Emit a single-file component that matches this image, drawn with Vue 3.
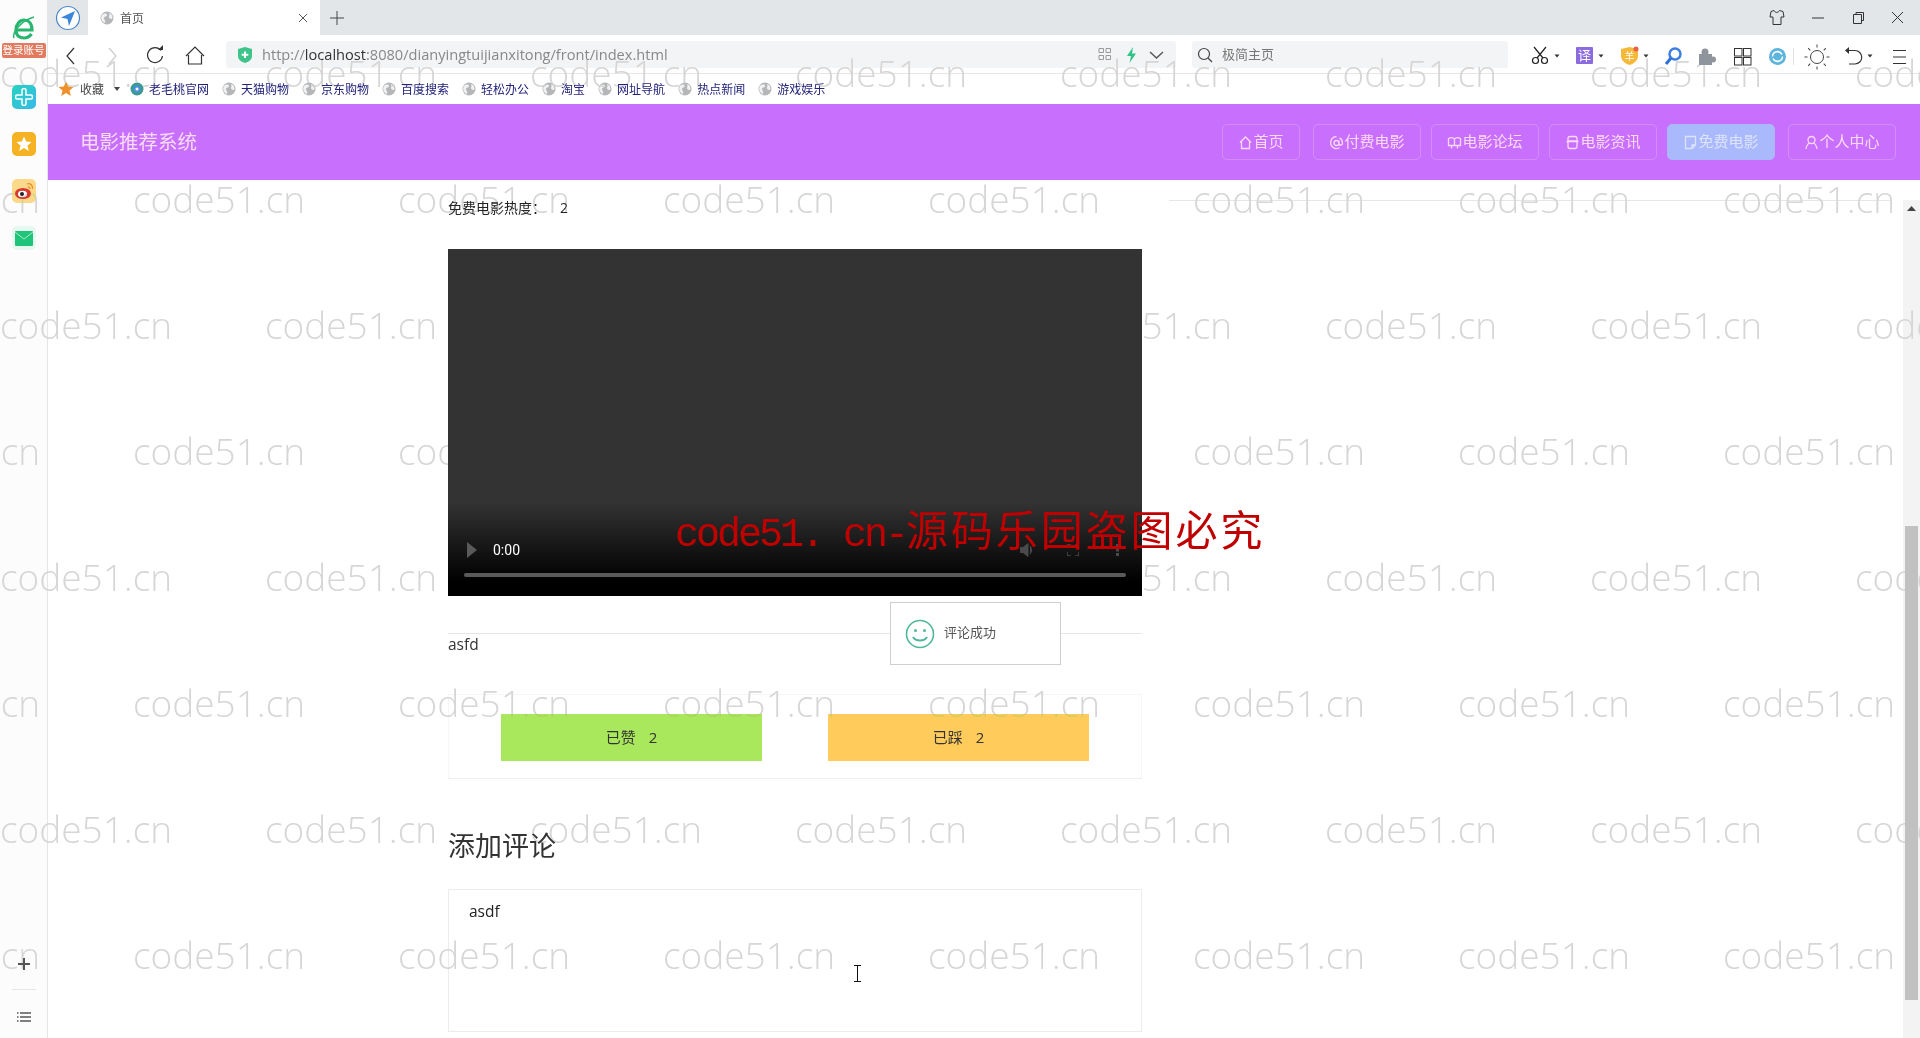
<script setup>
import { ref } from 'vue'

const comment = ref('asdf')

const bookmarks = ['天猫购物', '京东购物', '百度搜索', '轻松办公', '淘宝', '网址导航', '热点新闻', '游戏娱乐']

const navs = [
  { name: '首页', icon: 'M2 7.5 7.5 2 13 7.5M3.5 6.5V13.5H11.5V6.5', wide: true },
  { name: '付费电影', icon: 'M7.5 1.5a6 6 0 1 0 3 11.2M5 8a2.5 2.5 0 1 0 5 0a2.5 2.5 0 1 0-5 0M10 5.5V9.5a2 2 0 0 0 3.5-1.5a6 6 0 0 0-3-5.2' },
  { name: '电影论坛', icon: 'M1.5 3.5C3.5 2.5 6 2.5 7.5 4C9 2.5 11.500 2.5 13.500 3.500V10.500H1.500ZM7.500 4V10.500M4.500 10.500V13.500M10.500 10.500V13.500' },
  { name: '电影资讯', icon: 'M3 3a2 2 0 0 1 2-1.500H10a2 2 0 0 1 2 1.500V6H3ZM1.500 6.500H13.500M3 7V11.500A2 2 0 0 0 5 13.500H10A2 2 0 0 0 12 11.500V7' },
  { name: '免费电影', icon: 'M2.500 1.500H12.500V10L9 13.500H2.500ZM12.500 10H9V13.500', active: true },
  { name: '个人中心', icon: 'M7.500 1.500a3.500 3.500 0 1 0 0 7a3.500 3.500 0 1 0 0-7M2 14C2.500 10.500 4.500 8.500 5.500 8M13 14C12.500 10.500 10.500 8.500 9.500 8' }
]

// 水印的行，奇偶行错开半格
const marks = [0, 1, 2, 3, 4, 5, 6, 7]
const cols = [0, 1, 2, 3, 4, 5, 6, 7, 8]
const rays = [0, 45, 90, 135, 180, 225, 270, 315]
</script>

<template>
  <div class="screen">
    <svg width="0" height="0" class="defs">
      <symbol id="globe" viewBox="0 0 14 14">
        <circle cx="7" cy="7" r="6.500" fill="#b4b6b8" />
        <path d="M2 4c2-2 5-2 5 0s-3 1-3 3 2 2 1 5C2 11 0 7 2 4ZM9 2c3 1 4 4 3 6-2 0-3-1-3-2s1-2 0-4Z" fill="#f1f2f3" />
      </symbol>
    </svg>

    <aside class="sidebar">
      <svg class="logo" width="24" height="25" viewBox="0 0 24 25">
        <path d="M4 14H20C20 7 16 4 12 4S4 8 4 14S8 22 12 22C16 22 18 20 19.500 18" fill="none" stroke="#27b56f" stroke-width="3.200" />
        <path d="M2 22C0 17 8 5 22 1" fill="none" stroke="#27b56f" stroke-width="1.500" />
      </svg>
      <div class="badge">登录账号</div>
      <div class="side-icon teal">
        <svg width="18" height="18" viewBox="0 0 18 18"><path d="M7 2.500a2 2 0 0 1 4 0V7h4.500a2 2 0 0 1 0 4H11v4.500a2 2 0 0 1-4 0V11H2.500a2 2 0 0 1 0-4H7Z" fill="none" stroke="#fff" stroke-width="1.500" /></svg>
      </div>
      <div class="side-icon gold">
        <svg width="16" height="16" viewBox="0 0 16 16"><path d="M8 .5 10.200 5.500 15.600 6 11.500 9.600 12.800 15 8 12.100 3.200 15 4.500 9.600.4 6 5.800 5.500Z" fill="#fff" /></svg>
      </div>
      <div class="side-icon peach">
        <svg width="20" height="18" viewBox="0 0 20 18">
          <ellipse cx="9" cy="11.500" rx="8" ry="5.500" fill="#d9382e" />
          <ellipse cx="8.500" cy="12" rx="4.500" ry="3.300" fill="#fff" />
          <circle cx="8" cy="12" r="2" fill="#222" />
          <path d="M13 2C16 1 19 3 18.500 7M13.500 5C15 4.500 16 5.500 16 7" fill="none" stroke="#e8912c" stroke-width="1.300" />
        </svg>
      </div>
      <div class="side-icon mail">
        <svg width="18" height="15" viewBox="0 0 18 15">
          <rect width="18" height="15" rx="1" fill="#1fc47a" />
          <path d="M0 1 9 8 18 1" fill="none" stroke="#a9ecc9" stroke-width="1" />
        </svg>
      </div>
      <svg class="side-plus" width="14" height="14" viewBox="0 0 14 14"><path d="M7 1V13M1 7H13" stroke="#555" stroke-width="2" /></svg>
      <div class="side-sep"></div>
      <svg class="side-list" width="14" height="12" viewBox="0 0 14 12"><path d="M3 2H14M3 6H14M3 10H14" stroke="#555" stroke-width="1.500" /><path d="M0 2H1.500M0 6H1.500M0 10H1.500" stroke="#555" stroke-width="1.500" /></svg>
    </aside>

    <div class="window">
      <div class="tabbar">
        <div class="compass">
          <svg width="26" height="26" viewBox="0 0 26 26">
            <circle cx="13" cy="13" r="11.500" fill="#fff" stroke="#4a86c8" stroke-width="1.200" />
            <path d="M20 6 14 21 12.500 14 6 12.500Z" fill="#3a86dc" />
          </svg>
        </div>
        <div class="tab">
          <svg width="14" height="14"><use href="#globe" /></svg>
          <span class="tab-title">首页</span>
          <svg class="tab-close" width="10" height="10" viewBox="0 0 10 10"><path d="M1 1 9 9M9 1 1 9" stroke="#555" stroke-width="1" /></svg>
        </div>
        <svg class="tab-add" width="14" height="14" viewBox="0 0 14 14"><path d="M7 0V14M0 7H14" stroke="#444" stroke-width="1" /></svg>
        <svg class="winctl" width="160" height="35" viewBox="0 0 160 35" fill="none" stroke="#333">
          <path d="M11 11.500 14 10.500C15 13 18.500 13 19.500 10.500L23 11.500 24 17H21V24.500H13V17H10Z" />
          <path d="M52 18H64" />
          <path d="M93.500 14.500H101.500V23.500H93.500ZM96 14.500V12.500H103.500V20.500H101.500" />
          <path d="M132 12 143 23M143 12 132 23" />
        </svg>
      </div>

      <div class="toolbar">
        <svg class="tb-nav" width="168" height="38" viewBox="0 0 168 38" fill="none">
          <path d="M26 13 19 21 26 29" stroke="#333" stroke-width="1.200" />
          <path d="M61 13 68 21 61 29" stroke="#ccc" stroke-width="1.200" />
          <path d="M113 15.500A7.500 7.500 0 1 0 114.500 21" stroke="#333" stroke-width="1.200" />
          <path d="M110 15H115V10Z" fill="#333" />
          <path d="M138 21 147 12 156 21M140.500 20V29H153.500V20" stroke="#333" stroke-width="1.200" />
        </svg>
        <div class="urlbar">
          <svg width="14" height="16" viewBox="0 0 14 16">
            <path d="M7 0 14 2V9C14 13 10 15 7 16 4 15 0 13 0 9V2Z" fill="#3ec48a" />
            <path d="M7 4.500V11M3.700 7.700H10.300" stroke="#fff" stroke-width="2" />
          </svg>
          <span class="url"><span class="url-dim">http://</span>localhost<span class="url-dim">:8080/dianyingtuijianxitong/front/index.html</span></span>
          <svg class="url-tools" width="70" height="20" viewBox="0 0 70 20" fill="none">
            <path d="M3 3.500H7.500V7.500H3ZM10 3.500H14.500V7.500H10ZM3 10.500H7.500V14.500H3ZM10 10.500H14.500V14.500H10Z" stroke="#999" />
            <path d="M37 2 31 11H35L33.500 18 40 8.500H36Z" fill="#2ec486" />
            <path d="M54 7 60.500 13 67 7" stroke="#555" stroke-width="1.400" />
          </svg>
        </div>
        <div class="searchbar">
          <svg width="16" height="16" viewBox="0 0 16 16" fill="none" stroke="#444" stroke-width="1.200"><circle cx="7" cy="7" r="5.500" /><path d="M11 11 15 15" /></svg>
          <span class="search-text">极简主页</span>
        </div>
        <svg class="tb-tools" width="400" height="38" viewBox="0 0 400 38" fill="none">
          <g stroke="#222" stroke-width="1.200">
            <circle cx="15.500" cy="25.500" r="3" />
            <circle cx="24.500" cy="25.500" r="3" />
            <path d="M17 23 26 12M23 23 14 12" />
          </g>
          <path d="M34.500 19.500H39.500L37 22.500Z" fill="#333" />
          <rect x="56" y="12" width="17" height="17" rx="1" fill="#8c6be0" />
          <text x="64.500" y="25" class="tb-glyph">译</text>
          <path d="M78.500 19.500H83.500L81 22.500Z" fill="#333" />
          <path d="M109.500 12 118 14V21C118 26 113 29 109.500 30 106 29 101 26 101 21V14Z" fill="#f5b93a" />
          <text x="109.500" y="25" class="tb-glyph small">羊</text>
          <circle cx="116" cy="14" r="2.500" fill="#e8604c" />
          <path d="M123.500 19.500H128.500L126 22.500Z" fill="#333" />
          <circle cx="155" cy="19" r="5.500" stroke="#3d7fe0" stroke-width="2.500" />
          <path d="M151 23 146 29" stroke="#2f6fd8" stroke-width="3" />
          <g fill="#8f959c">
            <rect x="179" y="19" width="13" height="11" />
            <circle cx="185" cy="17" r="3.500" />
            <circle cx="193" cy="24.500" r="3" />
          </g>
          <g stroke="#333">
            <rect x="214.500" y="13.500" width="7.500" height="7.500" />
            <rect x="223.500" y="13.500" width="7.500" height="7.500" />
            <rect x="214.500" y="22.500" width="7.500" height="7.500" />
            <rect x="223.500" y="22.500" width="7.500" height="7.500" />
          </g>
          <circle cx="257.500" cy="21.500" r="8.500" fill="#5db4dc" />
          <path d="M252.500 21.500A5 5 0 0 1 262 19.500M262.500 21.500A5 5 0 0 1 253 23.500" stroke="#fff" stroke-width="1.500" />
          <path d="M273.500 13V30" stroke="#e2e2e2" />
          <circle cx="297" cy="22" r="6.500" stroke="#444" />
          <g stroke="#444">
            <path v-for="r in rays" :key="r" d="M297 12.500V9.500" :transform="`rotate(${r} 297 22)`" />
          </g>
          <path d="M328 15.500H335A6.500 6.500 0 0 1 335 29H329" stroke="#333" stroke-width="1.200" />
          <path d="M329 12V19L325 15.500Z" fill="#333" />
          <path d="M347.500 19.500H352.500L350 22.500Z" fill="#333" />
          <path d="M373 15.500H386M373 22H386M373 28.500H386" stroke="#333" />
        </svg>
      </div>

      <div class="bookmarks">
        <svg class="bm-star" width="16" height="16" viewBox="0 0 16 16"><path d="M8 .5 10.200 5.500 15.600 6 11.500 9.600 12.800 15 8 12.100 3.200 15 4.500 9.600.4 6 5.800 5.500Z" fill="#f0902a" /></svg>
        <span class="bm-fav">收藏</span>
        <svg class="bm-caret" width="6" height="4" viewBox="0 0 6 4"><path d="M0 0H6L3 4Z" fill="#444" /></svg>
        <div class="bm-item first">
          <svg width="14" height="14" viewBox="0 0 14 14">
            <circle cx="7" cy="7" r="6.500" fill="#3a9a90" />
            <circle cx="7" cy="7" r="3.500" fill="#4c8fe0" />
            <circle cx="7" cy="7" r="1.500" fill="#fff" />
          </svg>
          <span>老毛桃官网</span>
        </div>
        <div v-for="b in bookmarks" :key="b" class="bm-item">
          <svg width="14" height="14"><use href="#globe" /></svg>
          <span>{{ b }}</span>
        </div>
      </div>

      <header class="site-head">
        <div class="site-title">电影推荐系统</div>
        <nav class="site-nav">
          <a v-for="n in navs" :key="n.name" class="nav-btn" :class="{ active: n.active, wide: n.wide }">
            <svg width="15" height="15" viewBox="0 0 15 15" fill="none" stroke="currentColor" stroke-width="1.300"><path :d="n.icon" /></svg>
            {{ n.name }}
          </a>
        </nav>
      </header>

      <main class="page">
        <div class="detail">
          <div class="hot">免费电影热度：<span class="hot-num">2</span></div>
          <div class="video">
            <div class="controls">
              <div class="ctl-row">
                <svg width="10" height="16" viewBox="0 0 10 16"><path d="M0 0 10 8 0 16Z" fill="#5a5a5a" /></svg>
                <span class="time">0:00</span>
                <svg class="ctl-vol" width="14" height="14" viewBox="0 0 14 14"><path d="M0 4.500H3L8 .5V13.500L3 9.500H0ZM10 3C12 5 12 9 10 11" fill="#4a4a4a" stroke="#4a4a4a" /></svg>
                <svg class="ctl-full" width="12" height="12" viewBox="0 0 12 12" fill="none"><path d="M0 4V0H4M8 0H12V4M12 8V12H8M4 12H0V8" stroke="#4a4a4a" stroke-width="1.500" /></svg>
                <svg class="ctl-more" width="3" height="12" viewBox="0 0 3 12"><path d="M0 0H3V3H0ZM0 4.500H3V7.500H0ZM0 9H3V12H0Z" fill="#4a4a4a" /></svg>
              </div>
              <div class="progress"></div>
            </div>
          </div>
          <hr class="rule" />
          <div class="desc">asfd</div>
          <div class="votes">
            <button class="vote up">已赞<span class="vote-num">2</span></button>
            <button class="vote down">已踩<span class="vote-num">2</span></button>
          </div>
          <h2 class="add-title">添加评论</h2>
          <textarea v-model="comment" class="comment"></textarea>

          <div class="toast">
            <svg width="30" height="30" viewBox="0 0 30 30" fill="none" stroke="#4fb89a" stroke-width="1.600">
              <circle cx="15" cy="15" r="13.500" />
              <circle cx="10.500" cy="11.500" r="1.500" fill="#4fb89a" stroke="none" />
              <circle cx="19.500" cy="11.500" r="1.500" fill="#4fb89a" stroke="none" />
              <path d="M8 18C10.500 22.500 19.500 22.500 22 18" stroke-width="2" />
            </svg>
            <span class="toast-text">评论成功</span>
          </div>
        </div>
        <div class="far-rule"></div>
        <div class="scrollbar">
          <svg class="scroll-arrow" width="9" height="5" viewBox="0 0 9 5"><path d="M4.500 0 9 5H0Z" fill="#444" /></svg>
          <div class="scroll-thumb"></div>
        </div>
      </main>
    </div>

    <div class="marks">
      <div v-for="r in marks" :key="r" class="mark-row" :class="{ odd: r % 2 }">
        <span v-for="c in cols" :key="c" class="mark">code51.cn</span>
      </div>
    </div>

    <div class="stamp"><span class="stamp-latin">code51. cn-</span>源码乐园盗图必究</div>

    <svg class="ibeam" width="9" height="17" viewBox="0 0 9 17" fill="none"><path d="M1 .5H8M4.500 .5V16.500M1 16.500H8" stroke="#111" /></svg>
  </div>
</template>

<style scoped>
.screen {
  position: relative;
  display: flex;
  width: 1920px;
  height: 1038px;
  overflow: hidden;
  background: #fff;
  color: #333;
  font-family: "Open Sans", "Noto Sans CJK SC", sans-serif;
}
.defs {
  position: absolute;
}
.sidebar {
  display: flex;
  flex-direction: column;
  align-items: center;
  width: 48px;
  flex: none;
  box-sizing: border-box;
  border-right: 1px solid #e6e6e6;
  background: #fcfcfc;
  padding-top: 16px;
}
.logo {
  display: block;
}
.badge {
  width: 44px;
  height: 15px;
  margin-top: 2px;
  background: #e27a5f;
  border-radius: 2px;
  color: #fff;
  font-size: 10.500px;
  line-height: 15px;
  text-align: center;
  white-space: nowrap;
}
.side-icon {
  display: flex;
  align-items: center;
  justify-content: center;
  width: 24px;
  height: 24px;
  border-radius: 5px;
  margin-top: 23px;
}
.teal {
  margin-top: 27px;
  background: linear-gradient(135deg, #25d3c0, #3ab8e8);
}
.gold {
  background: #f5b324;
}
.peach {
  background: #fcd98a;
}
.mail {
  background: #e6f8ef;
}
.side-plus {
  margin-top: auto;
}
.side-sep {
  width: 24px;
  height: 1px;
  margin-top: 18px;
  background: #e6e6e6;
}
.side-list {
  margin-top: 21px;
  margin-bottom: 15px;
}
.window {
  display: flex;
  flex-direction: column;
  flex: 1;
  min-width: 0;
}
.tabbar {
  display: flex;
  align-items: center;
  height: 35px;
  flex: none;
  background: #e3e6e8;
}
.compass {
  display: flex;
  align-items: center;
  justify-content: center;
  width: 40px;
  height: 35px;
}
.tab {
  display: flex;
  align-items: center;
  box-sizing: border-box;
  width: 232px;
  height: 35px;
  padding-left: 12px;
  background: #fff;
  font-size: 12px;
  color: #555;
}
.tab-title {
  margin-left: 6px;
}
.tab-close {
  margin-left: auto;
  margin-right: 12px;
}
.tab-add {
  margin-left: 10px;
}
.winctl {
  margin-left: auto;
}
.toolbar {
  display: flex;
  align-items: flex-start;
  height: 39px;
  flex: none;
  box-sizing: border-box;
  border-bottom: 1px solid #e6e6e6;
  background: #fff;
}
.urlbar {
  display: flex;
  align-items: center;
  box-sizing: border-box;
  width: 950px;
  height: 27px;
  margin-top: 6px;
  margin-left: 10px;
  padding-left: 12px;
  background: #f3f4f5;
  border-radius: 3px;
  font-size: 14.600px;
}
.url {
  margin-left: 10px;
  margin-top: -2px;
  color: #333;
  white-space: nowrap;
}
.url-dim {
  color: #888;
}
.url-tools {
  margin-left: auto;
  margin-right: 10px;
}
.searchbar {
  display: flex;
  align-items: center;
  gap: 9px;
  box-sizing: border-box;
  width: 316px;
  height: 27px;
  margin-top: 6px;
  margin-left: 16px;
  padding-left: 5px;
  background: #f3f4f5;
  border-radius: 3px;
  font-size: 13px;
  color: #777;
}
.search-text {
  margin-top: -2px;
}
.tb-tools {
  margin-left: 12px;
}
.tb-glyph {
  fill: #fff;
  font-size: 13px;
  text-anchor: middle;
}
.tb-glyph.small {
  font-size: 10px;
}
.bookmarks {
  display: flex;
  align-items: center;
  height: 30px;
  flex: none;
  padding-left: 10px;
  font-size: 12px;
}
.bm-fav {
  margin-left: 6px;
  color: #444;
}
.bm-caret {
  margin-left: 10px;
}
.bm-item {
  display: flex;
  align-items: center;
  gap: 5px;
  margin-left: 13px;
  color: #22227a;
  white-space: nowrap;
}
.bm-item.first {
  margin-left: 10px;
}
.site-head {
  display: flex;
  align-items: center;
  justify-content: space-between;
  height: 76px;
  flex: none;
  padding: 0 24px 0 32px;
  background: #c870fd;
}
.site-title {
  margin-top: -3px;
  font-size: 19.500px;
  color: #f8dcfa;
}
.site-nav {
  display: flex;
  gap: 10px;
}
.nav-btn {
  display: flex;
  align-items: center;
  box-sizing: border-box;
  height: 36px;
  padding: 0 15.500px 3px;
  border: 1px solid rgba(255, 255, 255, 0.2);
  border-radius: 5px;
  font-size: 15px;
  color: #fbd9f8;
  white-space: nowrap;
}
.nav-btn svg {
  margin-top: 3px;
}
.nav-btn.wide {
  margin-right: 3px;
}
.nav-btn.active {
  margin-right: 3px;
  background: #a9b9fb;
  border-color: #a9b9fb;
  color: #dde3ff;
}
.page {
  display: flex;
  flex: 1;
  min-height: 0;
}
.detail {
  position: relative;
  width: 694px;
  flex: none;
  margin-left: 400px;
  padding-top: 18px;
}
.hot {
  font-size: 14px;
  line-height: 20px;
  color: #222;
}
.hot-num {
  margin-left: 14px;
}
.video {
  display: flex;
  flex-direction: column;
  justify-content: flex-end;
  height: 347px;
  margin-top: 31px;
  background: linear-gradient(#333 73%, #000 96%);
}
.controls {
  padding: 0 16px 19px;
}
.ctl-row {
  display: flex;
  align-items: center;
  height: 32px;
  padding-left: 3px;
}
.time {
  margin-left: 16px;
  font-family: Roboto, sans-serif;
  font-size: 14px;
  color: #fff;
}
.ctl-vol {
  margin-left: 500px;
}
.ctl-full {
  margin-left: 33px;
}
.ctl-more {
  margin-left: 37px;
}
.progress {
  height: 4px;
  margin-top: 7px;
  background: #5a5a5a;
  border-radius: 2px;
}
.rule {
  height: 1px;
  margin: 37px 0 0;
  border: 0;
  background: #e6e6e6;
}
.desc {
  margin-top: -1px;
  font-size: 15.500px;
  line-height: 22px;
  color: #333;
}
.votes {
  display: flex;
  justify-content: center;
  gap: 66px;
  box-sizing: border-box;
  height: 85px;
  margin-top: 39px;
  padding-top: 19px;
  border: 1px solid #f6f6f6;
  border-bottom-color: #eeeeee;
}
.vote {
  width: 261px;
  height: 47px;
  padding: 0 0 2px;
  border: 0;
  font-family: inherit;
  font-size: 15px;
  color: #333;
}
.vote-num {
  margin-left: 13px;
}
.up {
  background: #a9e85c;
}
.down {
  background: #ffcc5c;
}
.add-title {
  margin: 47px 0 0;
  font-size: 27px;
  font-weight: 400;
  line-height: 40px;
  color: #333;
}
.comment {
  display: block;
  box-sizing: border-box;
  width: 100%;
  height: 143px;
  margin-top: 23px;
  padding: 10px 20px;
  border: 1px solid #ececec;
  outline: none;
  resize: none;
  overflow: hidden;
  background: transparent;
  font-family: inherit;
  font-size: 15.500px;
  line-height: 22px;
  color: #222;
}
.toast {
  position: absolute;
  left: 442px;
  top: 422px;
  display: flex;
  align-items: center;
  gap: 9px;
  box-sizing: border-box;
  width: 171px;
  height: 63px;
  padding-left: 14px;
  background: #fff;
  border: 1px solid #cfcfcf;
  font-size: 13px;
  color: #555;
}
.toast-text {
  margin-top: -4px;
}
.far-rule {
  width: 722px;
  height: 1px;
  flex: none;
  margin-top: 20px;
  margin-left: 27px;
  background: #e6e6e6;
}
.scrollbar {
  display: flex;
  flex-direction: column;
  align-items: center;
  width: 17px;
  height: 838px;
  flex: none;
  margin-top: 20px;
  margin-left: auto;
  background: #f3f3f3;
}
.scroll-arrow {
  margin-top: 6px;
}
.scroll-thumb {
  width: 13px;
  height: 474px;
  margin-top: 315px;
  background: #c1c1c1;
}
.marks {
  position: absolute;
  left: 0;
  top: 9px;
  pointer-events: none;
  mix-blend-mode: darken;
}
.mark-row {
  display: flex;
  height: 126px;
  align-items: center;
}
.mark-row.odd {
  margin-left: -132px;
}
.mark {
  width: 265px;
  flex: none;
  font-family: "Open Sans", sans-serif;
  font-size: 37px;
  font-weight: 300;
  color: #d6d6d6;
  white-space: nowrap;
}
.stamp {
  position: absolute;
  left: 675px;
  top: 497px;
  font-family: "Noto Sans CJK SC", sans-serif;
  font-size: 42px;
  line-height: 62px;
  letter-spacing: 2.900px;
  color: #c00000;
  white-space: nowrap;
}
.stamp-latin {
  font-family: "Liberation Mono", monospace;
  font-size: 40px;
  letter-spacing: -3px;
}
.ibeam {
  position: absolute;
  left: 853px;
  top: 965px;
}
</style>
